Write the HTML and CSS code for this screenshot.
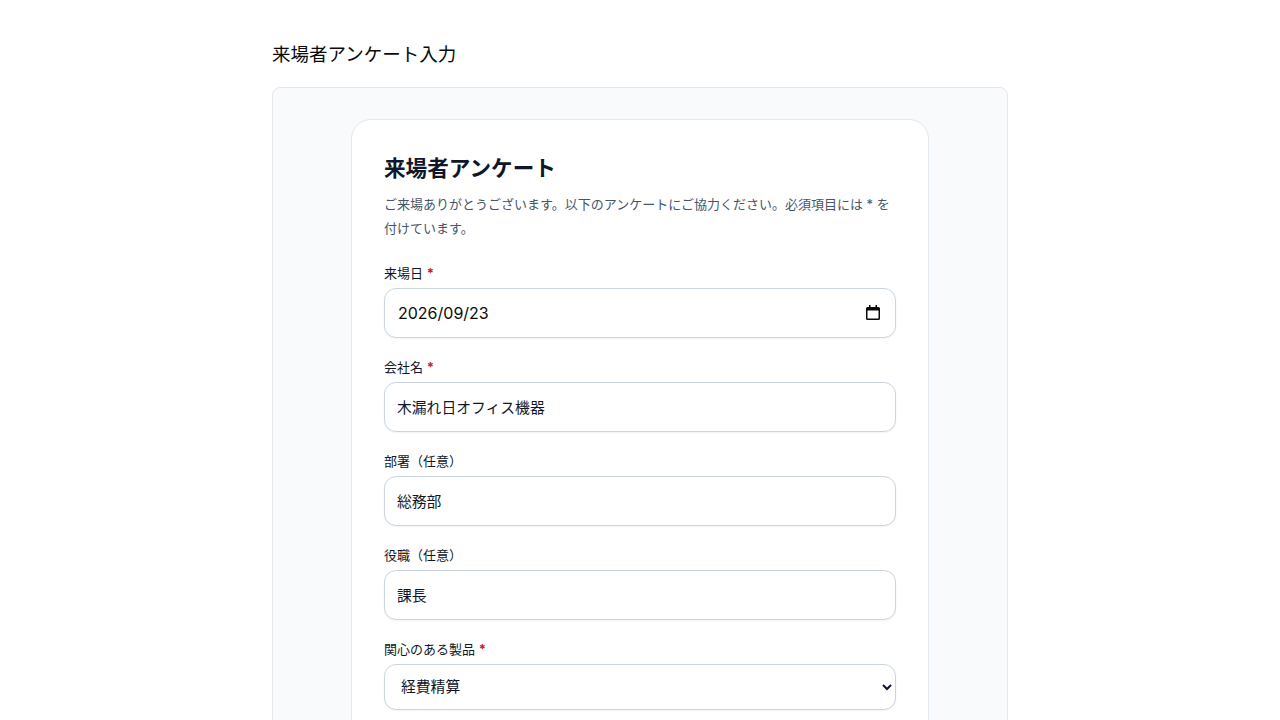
FILE: index.html
```html
<!DOCTYPE html>
<html lang="ja">
<head>
    <meta charset="UTF-8">
    <meta name="viewport" content="width=device-width, initial-scale=1.0">
    <title>来場者アンケート入力</title>
    <link rel="stylesheet" href="styles.css">
</head>
<body>
    <main class="page">
        <h1 class="page-title">来場者アンケート入力</h1>
        <section class="panel">
            <form class="card">
                <h2 class="card-title">来場者アンケート</h2>
                <p class="card-lead">ご来場ありがとうございます。以下のアンケートにご協力ください。必須項目には * を付けています。</p>

                <div class="field">
                    <label class="field-label" for="visit-date">来場日 <span class="req">*</span></label>
                    <div class="date-wrap">
                        <input class="control control-date" id="visit-date" type="text" value="2026/09/23">
                        <svg class="date-icon" width="14" height="15" viewBox="0 0 14 15" aria-hidden="true">
                            <path d="M3 0h1.5v2h5V0H11v2h1.5A1.5 1.5 0 0 1 14 3.5v10a1.5 1.5 0 0 1-1.5 1.5h-11A1.5 1.5 0 0 1 0 13.5v-10A1.5 1.5 0 0 1 1.500 2H3zM1.500 5.500v8h11v-8z" fill="#0a0a0a" fill-rule="evenodd"/>
                        </svg>
                    </div>
                </div>
                <div class="field">
                    <label class="field-label" for="company">会社名 <span class="req">*</span></label>
                    <input class="control control-text" id="company" type="text" value="木漏れ日オフィス機器">
                </div>
                <div class="field">
                    <label class="field-label" for="dept">部署（任意）</label>
                    <input class="control control-text" id="dept" type="text" value="総務部">
                </div>
                <div class="field">
                    <label class="field-label" for="position">役職（任意）</label>
                    <input class="control control-text" id="position" type="text" value="課長">
                </div>
                <div class="field">
                    <label class="field-label" for="product">関心のある製品 <span class="req">*</span></label>
                    <select class="control control-select" id="product">
                        <option>経費精算</option>
                        <option>勤怠管理</option>
                    </select>
                </div>
            </form>
        </section>
    </main>
</body>
</html>
```

FILE: styles.css
```css
* {
    box-sizing: border-box;
}
body {
    margin: 0;
    background: #fff;
    color: #0f172a;
    font-family: Inter, "Noto Sans CJK JP", sans-serif;
}
.page {
    width: 736px;
    margin: 0 auto;
    padding-top: 40px;
}
.page-title {
    margin: 0 0 19px;
    font-size: 18.5px;
    line-height: 28px;
    font-weight: 400;
    color: #0a0a0a;
}
.panel {
    background: #f8fafc;
    border: 1px solid #e5e7eb;
    border-radius: 8px;
    padding: 31px 78px 32px;
}
.card {
    background: #fff;
    border: 1px solid #e2e8f0;
    border-radius: 20px;
    padding: 32px;
}
.card-title {
    margin: 0 0 7px;
    font-size: 21.6px;
    line-height: 33px;
    font-weight: 700;
    color: #0f172a;
}
.card-lead {
    margin: 0 0 24px;
    font-size: 13px;
    line-height: 24px;
    color: #475569;
}
.field {
    margin-bottom: 20px;
}
.field-label {
    display: block;
    margin-bottom: 6px;
    font-size: 13px;
    line-height: 18px;
    font-weight: 400;
    color: #0f172a;
}
.req {
    color: #c81e1e;
    font-weight: 700;
}
.control {
    display: block;
    width: 100%;
    height: 50px;
    padding: 0 12px;
    background: #fff;
    border: 1px solid #cbd5e1;
    border-radius: 12px;
    box-shadow: 0 1px 2px rgba(15, 23, 42, 0.05);
    font-family: inherit;
    font-size: 14.8px;
    color: #0f172a;
}
.control-text {
    padding-bottom: 2px;
}
.control-select {
    height: 46px;
}
.date-wrap {
    position: relative;
}
.control-date {
    padding-left: 13px;
    font-size: 16px;
    color: #0a0a0a;
}
.date-icon {
    position: absolute;
    top: 17px;
    right: 16px;
}
```
